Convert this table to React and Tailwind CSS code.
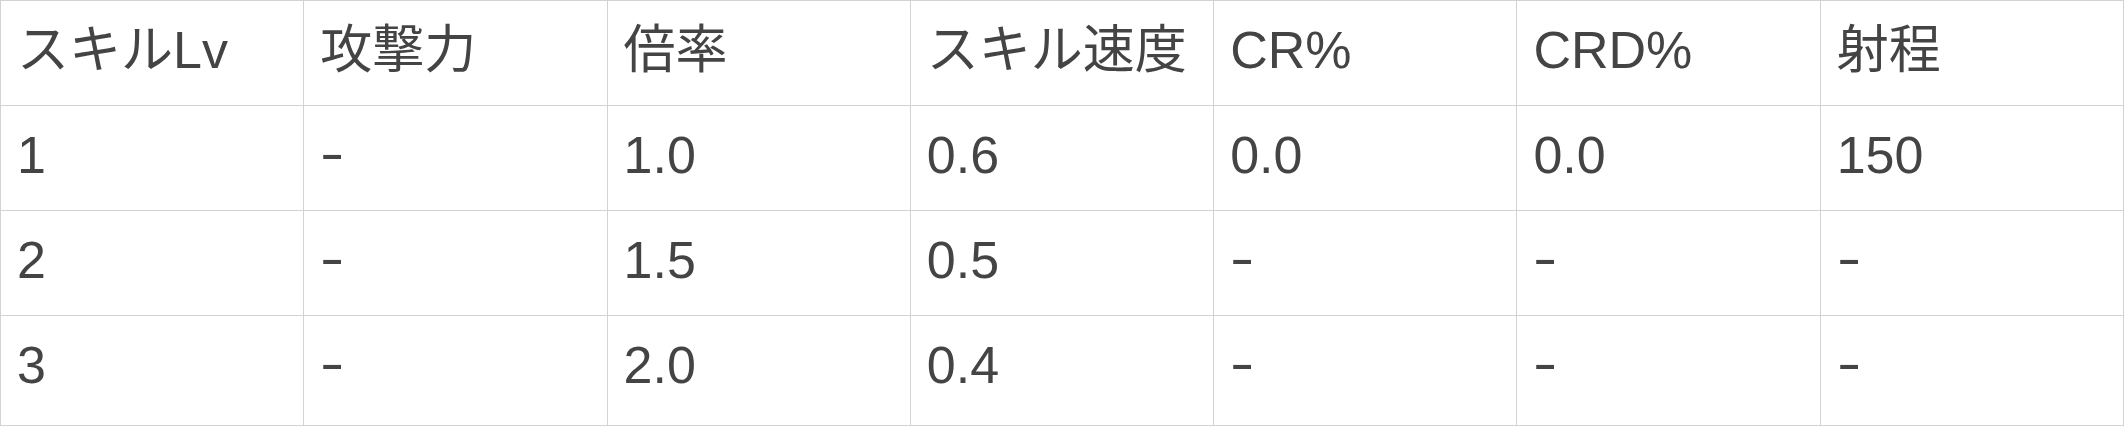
const headers = ["スキルLv", "攻撃力", "倍率", "スキル速度", "CR%", "CRD%", "射程"];

const rows = [
  ["1", "-", "1.0", "0.6", "0.0", "0.0", "150"],
  ["2", "-", "1.5", "0.5", "-", "-", "-"],
  ["3", "-", "2.0", "0.4", "-", "-", "-"],
];

function Value({ v }) {
  // the dash in the original is wider and sits a bit higher than Arial's hyphen
  if (v === "-") {
    return (
      <span className="inline-block origin-left scale-x-[1.4] -translate-y-0.5">-</span>
    );
  }
  return v;
}

function Cell({ children, last }) {
  return (
    <td
      className={`border border-[#d3d3d3] px-4 align-top pt-[13px] ${
        last ? "h-[110px]" : "h-[105px]"
      }`}
    >
      {children}
    </td>
  );
}

export default function App() {
  return (
    <div
      className="bg-white text-[#444444] text-[52px] leading-[1.4]"
      style={{ fontFamily: '"Liberation Sans", "Noto Sans CJK JP", sans-serif' }}
    >
      <table className="w-full table-fixed border-collapse">
        <thead>
          <tr>
            {headers.map((h) => (
              <th
                key={h}
                className="border border-[#d3d3d3] px-4 align-top pt-[13px] h-[105px] text-left font-normal whitespace-nowrap"
              >
                {h}
              </th>
            ))}
          </tr>
        </thead>
        <tbody>
          {rows.map((row, i) => (
            <tr key={i}>
              {row.map((v, j) => (
                <Cell key={j} last={i === rows.length - 1}>
                  <Value v={v} />
                </Cell>
              ))}
            </tr>
          ))}
        </tbody>
      </table>
    </div>
  );
}
